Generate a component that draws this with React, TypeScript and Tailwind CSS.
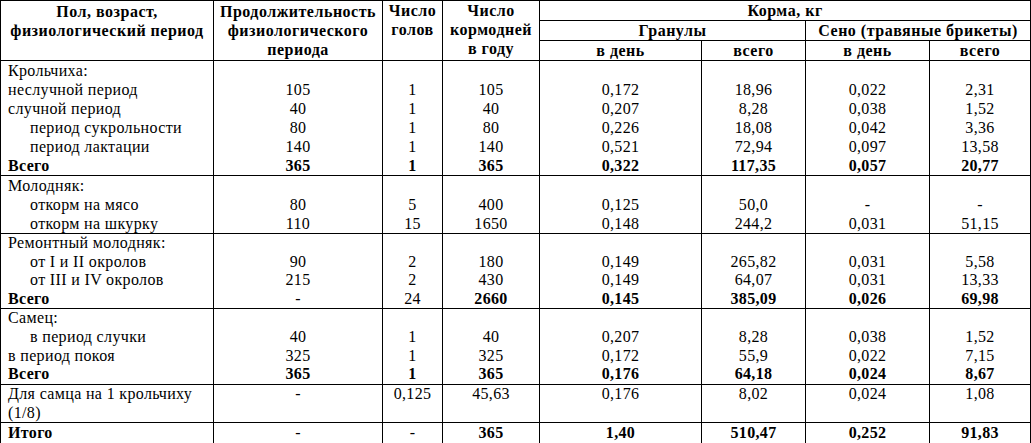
type Line = {
    label: string
    indent?: boolean
    bold?: boolean
    values?: (string | null)[]
    boldFrom?: number
}

type Section = { lh: number; lines: Line[] }

const sections: Section[] = [
    {
        lh: 19,
        lines: [
            { label: "Крольчиха:" },
            { label: "неслучной период", values: ["105", "1", "105", "0,172", "18,96", "0,022", "2,31"] },
            { label: "случной период", values: ["40", "1", "40", "0,207", "8,28", "0,038", "1,52"] },
            { label: "период сукрольности", indent: true, values: ["80", "1", "80", "0,226", "18,08", "0,042", "3,36"] },
            { label: "период лактации", indent: true, values: ["140", "1", "140", "0,521", "72,94", "0,097", "13,58"] },
            { label: "Всего", bold: true, boldFrom: 0, values: ["365", "1", "365", "0,322", "117,35", "0,057", "20,77"] },
        ],
    },
    {
        lh: 19,
        lines: [
            { label: "Молодняк:" },
            { label: "откорм на мясо", indent: true, values: ["80", "5", "400", "0,125", "50,0", "-", "-"] },
            { label: "откорм на шкурку", indent: true, values: ["110", "15", "1650", "0,148", "244,2", "0,031", "51,15"] },
        ],
    },
    {
        lh: 18.5,
        lines: [
            { label: "Ремонтный молодняк:" },
            { label: "от I и II окролов", indent: true, values: ["90", "2", "180", "0,149", "265,82", "0,031", "5,58"] },
            { label: "от III и IV окролов", indent: true, values: ["215", "2", "430", "0,149", "64,07", "0,031", "13,33"] },
            { label: "Всего", bold: true, boldFrom: 2, values: ["-", "24", "2660", "0,145", "385,09", "0,026", "69,98"] },
        ],
    },
    {
        lh: 18.75,
        lines: [
            { label: "Самец:" },
            { label: "в период случки", indent: true, values: ["40", "1", "40", "0,207", "8,28", "0,038", "1,52"] },
            { label: "в период покоя", values: ["325", "1", "325", "0,172", "55,9", "0,022", "7,15"] },
            { label: "Всего", bold: true, boldFrom: 0, values: ["365", "1", "365", "0,176", "64,18", "0,024", "8,67"] },
        ],
    },
    {
        lh: 18.5,
        lines: [
            { label: "Для самца на 1 крольчиху", values: ["-", "0,125", "45,63", "0,176", "8,02", "0,024", "1,08"] },
            { label: "(1/8)" },
        ],
    },
    {
        lh: 20,
        lines: [
            { label: "Итого", bold: true, boldFrom: 2, values: ["-", "-", "365", "1,40", "510,47", "0,252", "91,83"] },
        ],
    },
]

const th = "border border-black font-bold align-top p-0 leading-[19px] text-center tracking-[0.5px] whitespace-nowrap"
const td = "border border-black align-top p-0 tracking-[0.35px]"

export default function App() {
    return (
        <div className="bg-white w-[1031px] h-[443px] overflow-hidden text-black text-[16px] font-['Liberation_Serif','Times_New_Roman',serif]">
            <table className="table-fixed border-collapse w-[1030px]">
                <colgroup>
                    <col className="w-[213px]" />
                    <col className="w-[169px]" />
                    <col className="w-[60px]" />
                    <col className="w-[97px]" />
                    <col className="w-[162px]" />
                    <col className="w-[104px]" />
                    <col className="w-[124px]" />
                    <col className="w-[101px]" />
                </colgroup>
                <thead>
                    <tr>
                        <th rowSpan={3} className={th + " pt-[1px]"}>Пол, возраст,<br />физиологический период</th>
                        <th rowSpan={3} className={th + " pt-[1px]"}>Продолжительность<br />физиологического<br />периода</th>
                        <th rowSpan={3} className={th}>Число<br />голов</th>
                        <th rowSpan={3} className={th}>Число<br />кормодней<br />в году</th>
                        <th colSpan={4} className={th + " h-[18px] leading-[18px]"}>Корма, кг</th>
                    </tr>
                    <tr>
                        <th colSpan={2} className={th + " h-[19px]"}>Гранулы</th>
                        <th colSpan={2} className={th}>Сено (травяные брикеты)</th>
                    </tr>
                    <tr>
                        <th className={th + " h-[18px] leading-[18px]"}>в день</th>
                        <th className={th + " leading-[18px]"}>всего</th>
                        <th className={th + " leading-[18px]"}>в день</th>
                        <th className={th + " leading-[18px]"}>всего</th>
                    </tr>
                </thead>
                <tbody>
                    {sections.map((section, si) => (
                        <tr key={si}>
                            <td className={td + " pl-[7px]"}>
                                {section.lines.map((line, li) => (
                                    <div
                                        key={li}
                                        className={`whitespace-nowrap ${line.indent ? "pl-[22px]" : ""} ${line.bold ? "font-bold" : ""}`}
                                        style={{ height: section.lh, lineHeight: `${section.lh}px` }}
                                    >
                                        {line.label}
                                    </div>
                                ))}
                            </td>
                            {[0, 1, 2, 3, 4, 5, 6].map(ci => (
                                <td key={ci} className={td + " text-center"}>
                                    {section.lines.map((line, li) => {
                                        const v = line.values ? line.values[ci] : null
                                        const bold = line.boldFrom !== undefined && ci >= line.boldFrom
                                        return (
                                            <div
                                                key={li}
                                                className={bold ? "font-bold" : ""}
                                                style={{ height: section.lh, lineHeight: `${section.lh}px` }}
                                            >
                                                {v ?? ""}
                                            </div>
                                        )
                                    })}
                                </td>
                            ))}
                        </tr>
                    ))}
                </tbody>
            </table>
        </div>
    )
}
